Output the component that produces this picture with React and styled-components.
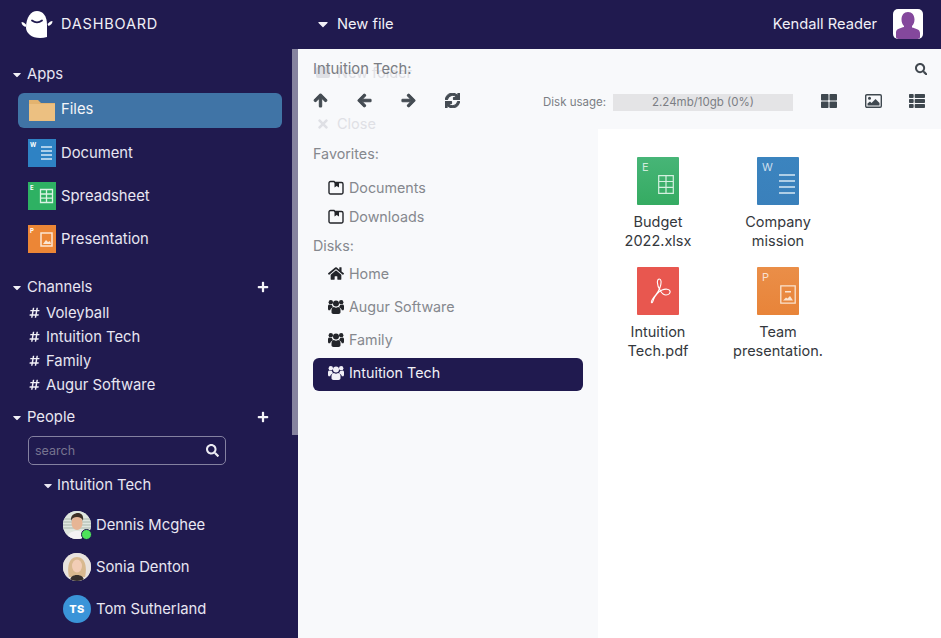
import React from "react";
import styled, { createGlobalStyle } from "styled-components";
import {
  FaArrowUp,
  FaArrowLeft,
  FaArrowRight,
  FaSync,
  FaSearch,
  FaThLarge,
  FaThList,
  FaHome,
  FaPlus,
  FaTimes,
  FaCaretDown,
  FaHashtag,
} from "react-icons/fa";

const NAVY = "#201a4f";

const Global = createGlobalStyle`
  html, body { margin: 0; padding: 0; height: 100%; }
  body { font-family: Inter, "Noto Sans", sans-serif; background: #f8f9fb; overflow: hidden; }
  * { box-sizing: border-box; }
`;

const Page = styled.div`
  width: 941px;
  height: 638px;
  display: flex;
  flex-direction: column;
  overflow: hidden;
`;

const Header = styled.header`
  height: 49px;
  flex: none;
  background: ${NAVY};
  color: #f1f0f7;
  display: flex;
  align-items: center;
  padding: 0 18px 2px 21px;
`;

const Brand = styled.div`
  width: 297px;
  display: flex;
  align-items: center;
  gap: 8px;
  font-size: 14.5px;
  letter-spacing: 0.8px;
`;

const NewFile = styled.div`
  display: flex;
  align-items: center;
  gap: 9px;
  font-size: 14.7px;
  svg { font-size: 16px; width: 10px; }
`;

const UserBox = styled.div`
  margin-left: auto;
  display: flex;
  align-items: center;
  gap: 16px;
  font-size: 14.7px;
`;

const UserPic = styled.div`
  width: 30px;
  height: 30px;
  margin-top: 1px;
  border-radius: 5px;
  background: #fff;
  overflow: hidden;
  display: flex;
  svg { width: 30px; height: 30px; }
`;

const Body = styled.div`
  flex: 1;
  display: flex;
  min-height: 0;
`;

const Sidebar = styled.aside`
  position: relative;
  width: 298px;
  flex: none;
  background: ${NAVY};
  color: #e8e6f2;
  padding-top: 16px;
  overflow: hidden;
`;

const ScrollThumb = styled.div`
  position: absolute;
  top: 0;
  right: 0;
  width: 6px;
  height: 386px;
  background: #86839f;
`;

const SectionHead = styled.div`
  height: 20px;
  display: flex;
  align-items: center;
  padding: 0 29px 2px 12px;
  font-size: 14.8px;
  margin-top: ${(p) => p.$top || 0}px;
  svg.caret { font-size: 13px; width: 10px; margin-right: 5px; color: #f1f0f7; }
  svg.plus { margin-left: auto; font-size: 12px; color: #f4f4f8; }
`;

const AppRow = styled.div`
  height: ${(p) => (p.$active ? 35 : 43)}px;
  width: 264px;
  margin-left: 18px;
  margin-top: ${(p) => p.$top || 0}px;
  padding-left: 10px;
  display: flex;
  align-items: center;
  gap: 5px;
  font-size: 14.8px;
  border-radius: 6px;
  background: ${(p) => (p.$active ? "#4074a6" : "transparent")};
  color: ${(p) => (p.$active ? "#f4f4f8" : "inherit")};
`;

const AppLabel = styled.span`
  position: relative;
  top: ${(p) => (p.$active ? -2 : 0)}px;
`;

const AppIconBox = styled.div`
  width: 28px;
  height: 28px;
  flex: none;
  position: relative;
  display: flex;
  svg { width: 100%; height: 100%; display: block; }
`;

const TinyLetter = styled.span`
  position: absolute;
  left: 2px;
  top: 2px;
  font-size: 6px;
  font-weight: 700;
  color: #fff;
  line-height: 8px;
`;

const ChannelList = styled.div`
  margin: 4px 0 10px;
`;

const ChannelRow = styled.div`
  height: 24px;
  display: flex;
  align-items: center;
  padding: 0 0 2px 29px;
  gap: 6px;
  font-size: 14.8px;
  svg { font-size: 11.500px; width: 11px; color: #f1f0f7; }
`;

const SearchBox = styled.div`
  width: 198px;
  height: 29px;
  margin: 8px 0 0 28px;
  border: 1px solid #8481a0;
  border-radius: 5px;
  display: flex;
  align-items: center;
  justify-content: space-between;
  padding: 0 6px;
  font-size: 12.5px;
  color: #77748f;
  svg { font-size: 13px; color: #ecebf3; }
`;

const GroupHead = styled.div`
  height: 20px;
  margin-top: 11px;
  padding: 0 0 2px 43px;
  display: flex;
  align-items: center;
  gap: 4px;
  font-size: 14.8px;
  svg { font-size: 13px; width: 10px; }
`;

const PeopleList = styled.div`
  margin-top: 8px;
`;

const PersonRow = styled.div`
  height: 42px;
  padding-left: 63px;
  display: flex;
  align-items: center;
  gap: 5px;
  font-size: 14.8px;
`;

const Avatar = styled.div`
  width: 28px;
  height: 28px;
  flex: none;
  position: relative;
  border-radius: 50%;
  background: ${(p) => p.$bg || "#ddd"};
  color: #fff;
  font-size: 11px;
  font-weight: 800;
  letter-spacing: 0.4px;
  display: flex;
  align-items: center;
  justify-content: center;
  svg { width: 28px; height: 28px; border-radius: 50%; display: block; }
`;

const OnlineDot = styled.span`
  position: absolute;
  right: -1px;
  bottom: -1px;
  width: 11px;
  height: 11px;
  border-radius: 50%;
  background: #4de35a;
  border: 1px solid ${NAVY};
`;

const Main = styled.main`
  position: relative;
  flex: 1;
  display: flex;
  flex-direction: column;
  background: #f8f9fb;
  min-width: 0;
`;

const Toolbar = styled.div`
  position: relative;
  height: 80px;
  flex: none;
  padding: 11px 14px 0 15px;
`;

const PathRow = styled.div`
  height: 18px;
  display: flex;
  align-items: center;
  justify-content: space-between;
  font-size: 14.8px;
  color: #7a7d83;
  svg { font-size: 12.5px; color: #41484f; }
`;

const ActionRow = styled.div`
  margin-top: 13px;
  height: 18px;
  display: flex;
  align-items: center;
`;

const NavButtons = styled.div`
  width: 230px;
  display: flex;
  gap: 29px;
  font-size: 15px;
  color: #454c53;
  svg { display: block; stroke: currentColor; stroke-width: 36; }
`;

const DiskLabel = styled.span`
  font-size: 11.5px;
  color: #7b7e84;
  width: 70px;
  flex: none;
  white-space: nowrap;
  margin-top: 4px;
`;

const DiskBar = styled.div`
  width: 180px;
  height: 17px;
  flex: none;
  margin-top: 4px;
  background: #e4e4e6;
  color: #7b7e84;
  font-size: 11.5px;
  line-height: 17px;
  text-align: center;
`;

const ViewButtons = styled.div`
  display: flex;
  align-items: center;
  gap: 27.5px;
  margin: 2px 0 0 28px;
  font-size: 16px;
  color: #3f484f;
  svg { display: block; }
`;

const Ghost = styled.div`
  position: absolute;
  left: 18px;
  top: ${(p) => p.$top}px;
  display: flex;
  align-items: center;
  gap: 7px;
  font-size: 14.5px;
  color: #dfe0e5;
  svg { font-size: 14px; width: 14px; }
`;

const GhostFolder = styled.span`
  width: 14px;
  height: 11px;
  border-radius: 2px;
  background: #dfe0e5;
`;

const Content = styled.div`
  flex: 1;
  display: flex;
  min-height: 0;
`;

const Places = styled.nav`
  width: 300px;
  flex: none;
  padding: 15px 15px 0;
  font-size: 14.3px;
  color: #85888e;
`;

const PlacesLabel = styled.div`
  height: 20px;
  line-height: 20px;
  margin: ${(p) => p.$top || 0}px 0 ${(p) => p.$bottom || 0}px;
`;

const Place = styled.div`
  height: ${(p) => p.$h || 33}px;
  display: flex;
  align-items: center;
  gap: 5px;
  padding: 0 0 5px 15px;
  border-radius: 6px;
  background: ${(p) => (p.$active ? NAVY : "transparent")};
  color: ${(p) => (p.$active ? "#f1f0f7" : "inherit")};
  svg { width: 16px; height: 15px; flex: none; color: ${(p) => (p.$active ? "#f1f0f7" : "#23252a")}; }
`;

const Favorites = styled.div`
  margin-top: 11px;
`;

const FileGrid = styled.section`
  flex: 1;
  background: #fff;
  padding-top: 28px;
  display: grid;
  grid-template-columns: repeat(auto-fill, 120px);
  grid-auto-rows: 110px;
  align-content: start;
`;

const FileCell = styled.div`
  display: flex;
  flex-direction: column;
  align-items: center;
  font-size: 14.5px;
  line-height: 19px;
  color: #34383d;
  text-align: center;
`;

const FileThumb = styled.div`
  width: 42px;
  height: 48px;
  position: relative;
  border-radius: 1px;
  background: ${(p) => p.$bg};
  margin-bottom: 7px;
  svg { position: absolute; right: ${(p) => p.$artRight}px; bottom: ${(p) => p.$artBottom}px; display: block; }
`;

const ThumbLetter = styled.span`
  position: absolute;
  left: 5px;
  top: 4px;
  font-size: 11px;
  line-height: 13px;
  color: rgba(255, 255, 255, 0.75);
`;

const FileName = styled.div`
  width: 100px;
`;

function Logo() {
  return (
    <svg width="32" height="30" viewBox="0 0 32 30">
      <path d="M5 19c0-11 5-17 11-17s10 5 10 14v12c-6 2-14 1-17-2-2-2-4-4-4-7z" fill="#fff" />
      <path d="M0.5 13c2 0 3 1 5 3l-1 2c-2-1-4-2-4-5zM31.5 12c-2 0-3 1-5 3l1 2c2-1 4-2 4-5z" fill="#fff" />
      <path d="M11 11.5c3 2.2 7 2.2 10 0" fill="none" stroke={NAVY} strokeWidth="1.8" strokeLinecap="round" />
    </svg>
  );
}

function FolderIcon() {
  return (
    <svg viewBox="0 0 28 28">
      <path d="M1 3h9l3 3h14v18H1z" fill="#e3b36f" />
      <path d="M1 7h26v17H1z" fill="#ecc081" />
    </svg>
  );
}

function DocLines() {
  return (
    <svg viewBox="0 0 28 28">
      <rect width="28" height="28" fill="#2e82c4" />
      <path d="M13 8h11M13 12h11M13 16h11M13 20h11" stroke="#d5e8f6" strokeWidth="1.6" />
    </svg>
  );
}

function SheetLines() {
  return (
    <svg viewBox="0 0 28 28">
      <rect width="28" height="28" fill="#2eb163" />
      <path d="M12.5 7.5h12v13h-12zM12.5 12h12M12.5 16.200h12M18.500 7.500v13" fill="none" stroke="#d9f3e3" strokeWidth="1.300" />
    </svg>
  );
}

function SlideLines() {
  return (
    <svg viewBox="0 0 28 28">
      <rect width="28" height="28" fill="#ec8636" />
      <path d="M13 8h11v13H13z" fill="none" stroke="#fbe6d3" strokeWidth="1.500" />
      <path d="M15 19l3-4 2 2 2-1 1 3z" fill="#fbe6d3" />
    </svg>
  );
}

function BookmarkFolder() {
  return (
    <svg viewBox="0 0 16 15">
      <path d="M1 3a1.500 1.500 0 0 1 1.500-1.500h3.500l1 1h6.500A1.500 1.500 0 0 1 15 4v8.500a1.500 1.500 0 0 1-1.500 1.500h-11A1.500 1.500 0 0 1 1 12.500z" fill="none" stroke="#23252a" strokeWidth="1.400" />
      <path d="M6.500 2h4.500v5.500L8.700 6 6.500 7.500z" fill="#23252a" />
    </svg>
  );
}

function UsersIcon() {
  return (
    <svg viewBox="0 0 16 15" fill="currentColor">
      <circle cx="8" cy="4.500" r="3" />
      <circle cx="2.800" cy="3.200" r="2.200" />
      <circle cx="13.200" cy="3.200" r="2.200" />
      <path d="M3.500 13.300V11c0-2 1.500-3 2.500-3 .6.500 1.200.8 2 .8s1.400-.3 2-.8c1 0 2.500 1 2.500 3v2.300c0 1-.8 1.700-2 1.700h-5c-1.200 0-2-.7-2-1.700z" />
      <path d="M0 9V7.200c0-1 .7-1.700 1.500-1.700.5.400 1 .6 1.500.6.300 0 .6 0 .8-.1.300 1 .9 1.800 1.400 2.300-1.600.5-2.800 1.500-3 3H1c-.6 0-1-.6-1-1.500zM16 9V7.200c0-1-.7-1.700-1.500-1.700-.5.400-1 .6-1.500.6-.3 0-.6 0-.8-.1-.3 1-.9 1.800-1.400 2.300 1.600.5 2.800 1.500 3 3h1.200c.6 0 1-.6 1-1.500z" />
    </svg>
  );
}

function PictureIcon() {
  return (
    <svg width="17" height="14" viewBox="0 0 17 14">
      <rect x=".7" y=".7" width="15.600" height="12.600" rx="1.200" fill="none" stroke="#3f484f" strokeWidth="1.400" />
      <circle cx="4.500" cy="4.200" r="1.500" fill="#3f484f" />
      <path d="M2.500 11.500V9.500l2.500-2 1.500 1.500 4-4 4 4v2.500z" fill="#3f484f" />
    </svg>
  );
}

function Person() {
  return (
    <svg viewBox="0 0 30 30">
      <path d="M15 3c4 0 6.500 3 6.500 7.500 0 3-1 5-2.500 6.500v1.500c3 1 8 1.500 8 5.500V28c0 1-1 2-2 2H5c-1 0-2-1-2-2v-4.500c0-4 5-4.500 8-5.500V17c-1.500-1.500-2.500-3.500-2.500-6.500C8.500 6 11 3 15 3z" fill="#84489c" />
    </svg>
  );
}

function DennisFace() {
  return (
    <svg viewBox="0 0 28 28">
      <rect width="28" height="28" fill="#dfe6df" />
      <path d="M0 8h28M0 11h28M0 14h28M0 17h28" stroke="#a9b6ab" strokeWidth="1" />
      <path d="M4 28c0-6 5-8 10-8s10 2 10 8z" fill="#f3f2f4" />
      <ellipse cx="14" cy="12" rx="5.500" ry="7" fill="#e6b595" />
      <path d="M8 10c-1-6 4-8 7-8s6 2 5 8c-1-3-3-4-6-4s-5 1-6 4z" fill="#3d3026" />
    </svg>
  );
}

function SoniaFace() {
  return (
    <svg viewBox="0 0 28 28">
      <rect width="28" height="28" fill="#e9e3de" />
      <path d="M6 24c-2-8-1-20 8-20s10 12 8 20z" fill="#d9b98f" />
      <ellipse cx="14" cy="13" rx="5" ry="6.500" fill="#f2cdb6" />
      <path d="M7 28c0-4 3-6 7-6s7 2 7 6z" fill="#37302d" />
    </svg>
  );
}

const apps = [
  { name: "Document", icon: <DocLines />, letter: "W" },
  { name: "Spreadsheet", icon: <SheetLines />, letter: "E" },
  { name: "Presentation", icon: <SlideLines />, letter: "P" },
];

const channels = ["Voleyball", "Intuition Tech", "Family", "Augur Software"];

const disks = [
  { name: "Home", icon: <FaHome /> },
  { name: "Augur Software", icon: <UsersIcon /> },
  { name: "Family", icon: <UsersIcon /> },
  { name: "Intuition Tech", icon: <UsersIcon />, active: true },
];

const files = [
  {
    name: "Budget 2022.xlsx",
    bg: "linear-gradient(#47b577, #35ab62)",
    letter: "E",
    right: 5,
    bottom: 11,
    art: (
      <svg width="16" height="19" viewBox="0 0 16 19">
        <path d="M.7.7h14.600v17.600H.7zM.7 6.500h14.600M.7 12.300h14.600M8 .7v17.600" fill="none" stroke="#d4f0df" strokeWidth="1.200" />
      </svg>
    ),
  },
  {
    name: "Company mission",
    bg: "linear-gradient(#3b84bf, #3a80bb)",
    letter: "W",
    right: 4,
    bottom: 11,
    art: (
      <svg width="16" height="20" viewBox="0 0 16 20">
        <path d="M0 1h16M0 7h16M0 13h16M0 19h16" stroke="#d6e7f4" strokeWidth="1.300" />
      </svg>
    ),
  },
  {
    name: "Intuition Tech.pdf",
    bg: "#e8574f",
    right: 8,
    bottom: 11,
    art: (
      <svg width="21" height="26" viewBox="0 0 21 26">
        <path
          d="M1.500 24.500C.5 23 3 20 6 16.500 9 13 11.500 7 11 3 10.700 .5 8 .2 7.500 3 7 6 8.500 10 10.500 13 12 15.500 14 17 16 17 19 17 20.500 15 20 13 19.500 11 15.500 10.500 12 12 8 14 5 18 3.500 21.500 2.800 23.500 2.200 25.500 1.500 24.500z"
          fill="none"
          stroke="#fff"
          strokeWidth="1.100"
        />
      </svg>
    ),
  },
  {
    name: "Team presentation.",
    bg: "linear-gradient(#ea8e48, #e88439)",
    letter: "P",
    right: 3,
    bottom: 11,
    art: (
      <svg width="16" height="19" viewBox="0 0 16 19">
        <path d="M.8.8h14.400v17.400H.8z" fill="none" stroke="#fae3cf" strokeWidth="1.300" />
        <path d="M3 15.500l3-3 1.500 1 2.500-2.500 3 4.500zM5 6h6v1.500H5z" fill="#fae3cf" />
      </svg>
    ),
  },
];

export default function App() {
  return (
    <Page>
      <Global />
      <Header>
        <Brand>
          <Logo />
          DASHBOARD
        </Brand>
        <NewFile>
          <FaCaretDown />
          New file
        </NewFile>
        <UserBox>
          Kendall Reader
          <UserPic>
            <Person />
          </UserPic>
        </UserBox>
      </Header>
      <Body>
        <Sidebar>
          <ScrollThumb />
          <SectionHead>
            <FaCaretDown className="caret" />
            Apps
          </SectionHead>
          <AppRow $active $top={8}>
            <AppIconBox>
              <FolderIcon />
            </AppIconBox>
            <AppLabel $active>Files</AppLabel>
          </AppRow>
          <AppRow $top={3}>
            <AppIconBox>
              {apps[0].icon}
              <TinyLetter>{apps[0].letter}</TinyLetter>
            </AppIconBox>
            <AppLabel>{apps[0].name}</AppLabel>
          </AppRow>
          {apps.slice(1).map((a) => (
            <AppRow key={a.name}>
              <AppIconBox>
                {a.icon}
                <TinyLetter>{a.letter}</TinyLetter>
              </AppIconBox>
              <AppLabel>{a.name}</AppLabel>
            </AppRow>
          ))}
          <SectionHead $top={18}>
            <FaCaretDown className="caret" />
            Channels
            <FaPlus className="plus" />
          </SectionHead>
          <ChannelList>
            {channels.map((c) => (
              <ChannelRow key={c}>
                <FaHashtag />
                {c}
              </ChannelRow>
            ))}
          </ChannelList>
          <SectionHead>
            <FaCaretDown className="caret" />
            People
            <FaPlus className="plus" />
          </SectionHead>
          <SearchBox>
            search
            <FaSearch />
          </SearchBox>
          <GroupHead>
            <FaCaretDown />
            Intuition Tech
          </GroupHead>
          <PeopleList>
            <PersonRow>
              <Avatar>
                <DennisFace />
                <OnlineDot />
              </Avatar>
              Dennis Mcghee
            </PersonRow>
            <PersonRow>
              <Avatar>
                <SoniaFace />
              </Avatar>
              Sonia Denton
            </PersonRow>
            <PersonRow>
              <Avatar $bg="#3a94d8">TS</Avatar>
              Tom Sutherland
            </PersonRow>
          </PeopleList>
        </Sidebar>
        <Main>
          <Ghost $top={15}>
            <GhostFolder />
            New folder
          </Ghost>
          <Ghost $top={66}>
            <FaTimes />
            Close
          </Ghost>
          <Toolbar>
            <PathRow>
              Intuition Tech:
              <FaSearch />
            </PathRow>
            <ActionRow>
              <NavButtons>
                <FaArrowUp />
                <FaArrowLeft />
                <FaArrowRight />
                <FaSync />
              </NavButtons>
              <DiskLabel>Disk usage:</DiskLabel>
              <DiskBar>2.24mb/10gb (0%)</DiskBar>
              <ViewButtons>
                <FaThLarge />
                <PictureIcon />
                <FaThList />
              </ViewButtons>
            </ActionRow>
          </Toolbar>
          <Content>
            <Places>
              <PlacesLabel>Favorites:</PlacesLabel>
              <Favorites>
                <Place $h={29}>
                  <BookmarkFolder />
                  Documents
                </Place>
                <Place $h={29}>
                  <BookmarkFolder />
                  Downloads
                </Place>
              </Favorites>
              <PlacesLabel $top={3} $bottom={3}>Disks:</PlacesLabel>
              {disks.map((d) => (
                <Place key={d.name} $active={d.active}>
                  {d.icon}
                  {d.name}
                </Place>
              ))}
            </Places>
            <FileGrid>
              {files.map((f) => (
                <FileCell key={f.name}>
                  <FileThumb $bg={f.bg} $artRight={f.right} $artBottom={f.bottom}>
                    {f.letter && <ThumbLetter>{f.letter}</ThumbLetter>}
                    {f.art}
                  </FileThumb>
                  <FileName>{f.name}</FileName>
                </FileCell>
              ))}
            </FileGrid>
          </Content>
        </Main>
      </Body>
    </Page>
  );
}
